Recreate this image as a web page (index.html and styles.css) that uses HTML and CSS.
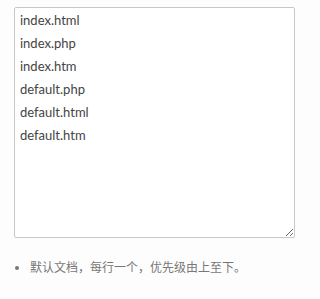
FILE: index.html
```html
<!DOCTYPE html>
<html lang="zh">

<head>
    <meta charset="utf-8">
    <title>默认文档</title>
    <link rel="stylesheet" href="styles.css">
</head>

<body>
    <!--默认文档输入框-->
    <div class="field">
        <textarea class="docs" spellcheck="false">index.html
index.php
index.htm
default.php
default.html
default.htm</textarea>
    </div>
    <!--提示-->
    <ul class="tips">
        <li>默认文档，每行一个，优先级由上至下。</li>
    </ul>
</body>

</html>
```

FILE: styles.css
```css
body,
html {
    margin: 0;
    background-color: #fdfdfd;
    font-family: "Noto Sans", "Noto Sans CJK SC", sans-serif;
}

.field {
    padding: 7px 0 0 14px;
}

/*textarea, samme størrelse som billedet*/

.docs {
    display: block;
    box-sizing: border-box;
    width: 281px;
    height: 231px;
    margin: 0;
    padding: 1px 5px;
    border: 1px solid #c8c8c8;
    border-radius: 2px;
    background-color: #fff;
    color: #444;
    font-family: Lato, "Noto Sans CJK SC", sans-serif;
    font-size: 13px;
    line-height: 23px;
    outline: none;
}

.tips {
    margin: 20px 0 0;
    padding: 0 0 0 30px;
    color: #777;
    font-size: 12px;
    line-height: 20px;
}
```
